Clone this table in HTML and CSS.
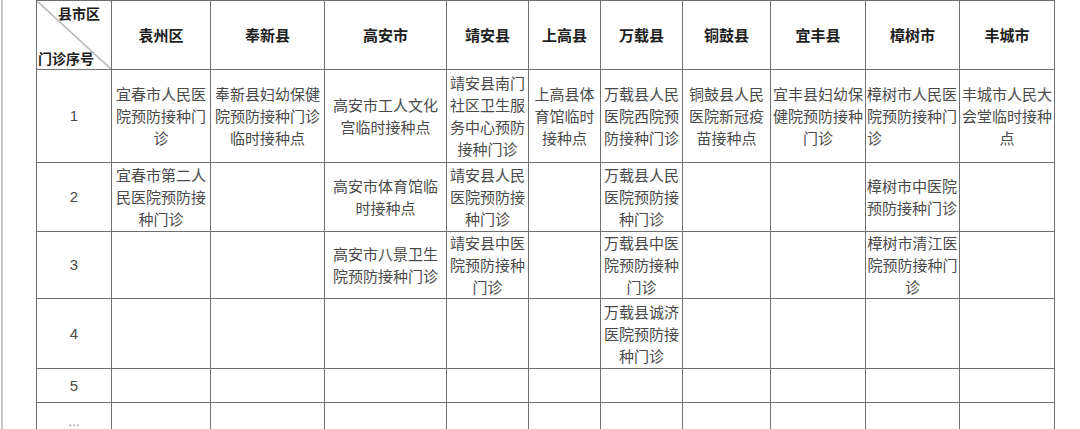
FILE: index.html
```html
<!DOCTYPE html>
<html lang="zh-CN">
<head>
<meta charset="utf-8">
<title>门诊表</title>
<link rel="stylesheet" href="styles.css">
</head>
<body>
<div class="page">
  <table class="grid">
    <colgroup>
      <col class="c0"><col class="c1"><col class="c2"><col class="c3"><col class="c4"><col class="c5"><col class="c6"><col class="c7"><col class="c8"><col class="c9"><col class="c10">
    </colgroup>
    <thead>
      <tr class="rh">
        <th class="corner">
          <div class="corner-box">
            <span class="corner-top">县市区</span>
            <span class="corner-bottom">门诊序号</span>
          </div>
        </th>
        <th>袁州区</th><th>奉新县</th><th>高安市</th><th>靖安县</th><th>上高县</th><th>万载县</th><th>铜鼓县</th><th>宜丰县</th><th>樟树市</th><th>丰城市</th>
      </tr>
    </thead>
    <tbody>
      <tr class="r1">
        <td class="num">1</td>
        <td>宜春市人民医院预防接种门诊</td>
        <td>奉新县妇幼保健院预防接种门诊临时接种点</td>
        <td>高安市工人文化宫临时接种点</td>
        <td>靖安县南门社区卫生服务中心预防接种门诊</td>
        <td>上高县体育馆临时接种点</td>
        <td>万载县人民医院西院预防接种门诊</td>
        <td>铜鼓县人民医院新冠疫苗接种点</td>
        <td>宜丰县妇幼保健院预防接种门诊</td>
        <td class="left">樟树市人民医院预防接种门诊</td>
        <td>丰城市人民大会堂临时接种点</td>
      </tr>
      <tr class="r2">
        <td class="num">2</td>
        <td>宜春市第二人民医院预防接种门诊</td>
        <td></td>
        <td>高安市体育馆临时接种点</td>
        <td>靖安县人民医院预防接种门诊</td>
        <td></td>
        <td>万载县人民医院预防接种门诊</td>
        <td></td>
        <td></td>
        <td class="left">樟树市中医院预防接种门诊</td>
        <td></td>
      </tr>
      <tr class="r3">
        <td class="num">3</td>
        <td></td>
        <td></td>
        <td>高安市八景卫生院预防接种门诊</td>
        <td>靖安县中医院预防接种门诊</td>
        <td></td>
        <td>万载县中医院预防接种门诊</td>
        <td></td>
        <td></td>
        <td>樟树市清江医院预防接种门诊</td>
        <td></td>
      </tr>
      <tr class="r4">
        <td class="num">4</td>
        <td></td><td></td><td></td><td></td><td></td>
        <td>万载县诚济医院预防接种门诊</td>
        <td></td><td></td><td></td><td></td>
      </tr>
      <tr class="r5">
        <td class="num">5</td>
        <td></td><td></td><td></td><td></td><td></td><td></td><td></td><td></td><td></td><td></td>
      </tr>
      <tr class="r6">
        <td class="num dots">…</td>
        <td></td><td></td><td></td><td></td><td></td><td></td><td></td><td></td><td></td><td></td>
      </tr>
    </tbody>
  </table>
</div>
</body>
</html>
```
FILE: styles.css
```css
html, body {
  margin: 0;
  padding: 0;
  background: #ffffff;
}
body {
  width: 1080px;
  height: 429px;
  overflow: hidden;
  font-family: "Noto Sans CJK SC", "Noto Sans", sans-serif;
}
.page {
  margin-left: 1px;
  border-left: 2px solid #c8c8c8;
  padding-left: 33px;
  height: 429px;
  box-sizing: border-box;
}
.grid {
  border-collapse: collapse;
  table-layout: fixed;
  width: 1019px;
}
.c0 { width: 75px; }
.c1 { width: 99px; }
.c2 { width: 114px; }
.c3 { width: 122px; }
.c4 { width: 82px; }
.c5 { width: 72px; }
.c6 { width: 82px; }
.c7 { width: 88px; }
.c8 { width: 95px; }
.c9 { width: 94px; }
.c10 { width: 95px; }

.grid th, .grid td {
  border: 1.5px solid #707070;
  padding: 0 1px;
  text-align: center;
  vertical-align: middle;
  font-size: 15px;
  line-height: 22px;
  color: #4a4a4a;
  word-break: break-all;
  overflow: hidden;
}
.grid th {
  font-weight: 700;
  color: #1e1e1e;
}
.grid td.left {
  text-align: left;
}
.grid td.num {
  font-family: "Liberation Sans", "Noto Sans", sans-serif;
  font-size: 15px;
  color: #4a4a4a;
}
.grid td.dots {
  vertical-align: top;
  padding-top: 8px;
  font-size: 12px;
  color: #777;
}
.rh { height: 69px; }
.r1 { height: 93px; }
.r2 { height: 69px; }
.r3 { height: 67px; }
.r4 { height: 70px; }
.r5 { height: 34px; }
.r6 { height: 40px; }

.grid th.corner {
  padding: 0;
  background: linear-gradient(to top right, transparent calc(50% - 0.8px), #707070 50%, transparent calc(50% + 0.8px));
}
.corner-box {
  height: 67px;
  display: flex;
  flex-direction: column;
  justify-content: space-between;
  font-size: 14px;
  line-height: 20px;
}
.corner-top {
  align-self: flex-end;
  padding-right: 11px;
  padding-top: 1px;
}
.corner-bottom {
  align-self: flex-start;
  padding-left: 1px;
  padding-bottom: 1px;
}
```
